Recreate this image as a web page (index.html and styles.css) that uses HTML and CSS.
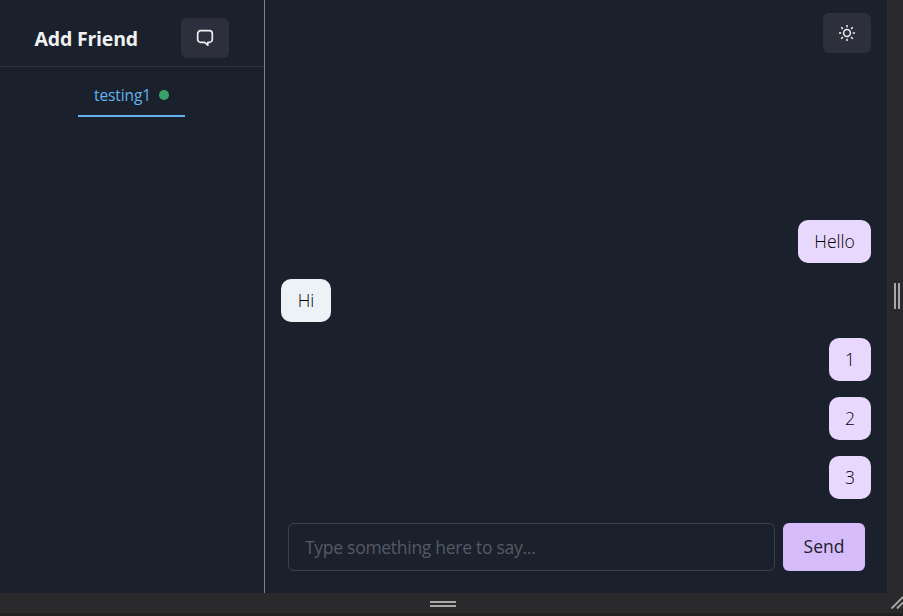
FILE: index.html
```html
<!DOCTYPE html>
<html lang="en">
<head>
<meta charset="utf-8">
<title>Chat</title>
<link rel="stylesheet" href="styles.css">
</head>
<body>
<div class="viewport">
  <div class="app">
    <aside class="sidebar">
      <header class="sidebar-header">
        <h1 class="title">Add Friend</h1>
        <button class="icon-button" aria-label="Add friend">
          <svg width="20" height="20" viewBox="0 0 20 20" fill="none" stroke="currentColor" stroke-width="1.7" stroke-linejoin="round"><path d="M5.7 2.7h8.6a3 3 0 0 1 3 3v5.7a3 3 0 0 1-3 3h-1.5v2.8L9.6 14.4H5.7a3 3 0 0 1-3-3V5.7a3 3 0 0 1 3-3z"/></svg>
        </button>
      </header>
      <nav class="tabs">
        <a class="tab"><span class="tab-name">testing1</span><span class="status"></span></a>
      </nav>
    </aside>
    <main class="chat">
      <div class="toolbar">
        <button class="icon-button" aria-label="Toggle theme">
          <svg width="16" height="16" viewBox="0 0 16 16" fill="none" stroke="currentColor" stroke-width="1.5"><circle cx="8" cy="8" r="3.4"/><path d="M8 0v2.2M8 13.8V16M0 8h2.2M13.8 8H16M2.2 2.2l1.7 1.7M12.1 12.1l1.7 1.7M2.2 13.8l1.7-1.7M12.1 3.9l1.7-1.7"/></svg>
        </button>
      </div>
      <div class="messages">
        <div class="bubble sent hello">Hello</div>
        <div class="bubble received">Hi</div>
        <div class="bubble sent">1</div>
        <div class="bubble sent">2</div>
        <div class="bubble sent">3</div>
      </div>
      <form class="composer">
        <input class="message-input" type="text" placeholder="Type something here to say...">
        <button class="send" type="button">Send</button>
      </form>
    </main>
  </div>
  <div class="handle-right"><span class="grip grip-vertical"></span></div>
  <div class="handle-bottom"><span class="grip grip-horizontal"></span></div>
  <div class="handle-corner"><svg width="16" height="20" viewBox="0 0 16 20" stroke="#a8a8a8" stroke-width="1.8"><path d="M4.5 15.5 16 4M10 15.5l6-6"/></svg></div>
</div>
</body>
</html>
```
FILE: styles.css
```css
* { box-sizing: border-box; }
body {
  margin: 0;
  background: #231f20;
  color: #eff0f1;
  font-family: "Open Sans", "Noto Sans", sans-serif;
  overflow: hidden;
}
button, input { font-family: inherit; }
.viewport {
  display: grid;
  grid-template-columns: 887px 16px;
  grid-template-rows: 593px 20px;
  height: 616px;
}
.app { display: flex; background: #1a202c; }
.sidebar { width: 265px; border-right: 1px solid #808080; }
.sidebar-header {
  display: flex;
  align-items: center;
  justify-content: space-between;
  height: 67px;
  padding: 9px 35px 0 34.5px;
  border-bottom: 1px solid #2f3440;
}
.title {
  margin: 2px 0 0;
  font-size: 19.5px;
  font-weight: 700;
  line-height: 24px;
  letter-spacing: -0.2px;
  white-space: nowrap;
}
.icon-button {
  display: flex;
  align-items: center;
  justify-content: center;
  width: 48px;
  height: 40px;
  padding: 0;
  border: 0;
  border-radius: 6px;
  background: #2d303c;
  color: #eff0f1;
}
.tabs { display: flex; justify-content: center; padding: 8px 2px 0 0; }
.tab {
  display: flex;
  align-items: center;
  width: 107px;
  height: 42px;
  padding: 0 16px;
  border-bottom: 2px solid #63b3ed;
  color: #63b3ed;
  font-size: 15.5px;
  letter-spacing: -0.1px;
}
.tab-name { width: 65px; text-indent: 0.5px; }
.status { width: 10px; height: 10px; border-radius: 50%; background: #38a169; flex: none; }
.chat { flex: 1; display: flex; flex-direction: column; min-width: 0; }
.toolbar { display: flex; justify-content: flex-end; padding: 13px 16px 0; }
.messages {
  flex: 1;
  display: flex;
  flex-direction: column;
  justify-content: flex-end;
  gap: 16px;
  padding: 0 16px 24px;
}
.bubble {
  display: flex;
  align-items: center;
  justify-content: center;
  width: 42px;
  height: 43px;
  padding-bottom: 2px;
  border-radius: 10px;
  color: #000;
  font-size: 17.5px;
  font-weight: 300;
}
.sent { align-self: flex-end; background: #e9d8fd; }
.received { align-self: flex-start; width: 50px; background: #edf2f7; }
.hello { width: 73px; }
.composer { display: flex; gap: 8px; padding: 0 22px 22px 23px; }
.message-input {
  flex: 1;
  min-width: 0;
  height: 48px;
  padding: 0 16px;
  border: 1px solid #3d414c;
  border-radius: 6px;
  background: transparent;
  color: #eff0f1;
  font-size: 17.5px;
  letter-spacing: -0.28px;
}
.message-input::placeholder { color: #555a63; opacity: 1; }
.send {
  width: 82px;
  height: 48px;
  padding: 0 0 2px;
  border: 0;
  border-radius: 6px;
  background: #d6bcfa;
  color: #1a202c;
  font-size: 17.5px;
  font-weight: 500;
}
.handle-right, .handle-bottom { display: flex; align-items: center; justify-content: center; background: #2a2a2d; }
.handle-right { padding: 0 0 1px 4px; }
.handle-bottom { padding-right: 2px; }
.handle-corner { background: #2a2a2d; }
.handle-corner svg { display: block; }
.grip-vertical { width: 6px; height: 26px; border: solid #a8a8a8; border-width: 0 2px; }
.grip-horizontal { width: 26px; height: 6px; margin-top: 2px; border: solid #a8a8a8; border-width: 2px 0; }
```
